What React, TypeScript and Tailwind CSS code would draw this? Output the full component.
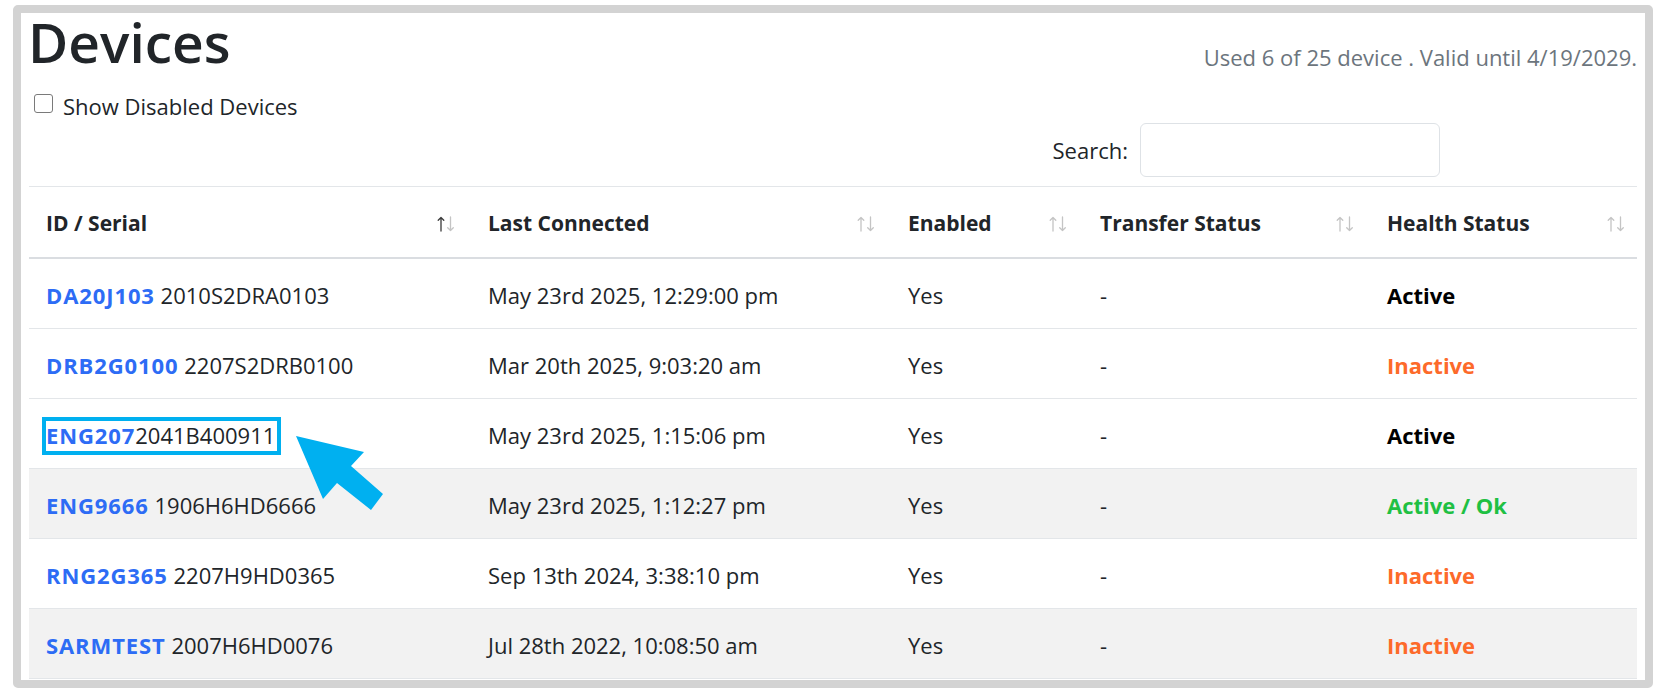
import React from "react";

type Row = {
  id: string;
  serial: string;
  sep: boolean;
  last: string;
  status: string;
  statusColor: string;
  striped: boolean;
  highlight?: boolean;
};

const rows: Row[] = [
  { id: "DA20J103", serial: "2010S2DRA0103", sep: true, last: "May 23rd 2025, 12:29:00 pm", status: "Active", statusColor: "text-black", striped: false },
  { id: "DRB2G0100", serial: "2207S2DRB0100", sep: true, last: "Mar 20th 2025, 9:03:20 am", status: "Inactive", statusColor: "text-[#fd6a2a]", striped: false },
  { id: "ENG207", serial: "2041B400911", sep: false, last: "May 23rd 2025, 1:15:06 pm", status: "Active", statusColor: "text-black", striped: false, highlight: true },
  { id: "ENG9666", serial: "1906H6HD6666", sep: true, last: "May 23rd 2025, 1:12:27 pm", status: "Active / Ok", statusColor: "text-[#1fc043]", striped: true },
  { id: "RNG2G365", serial: "2207H9HD0365", sep: true, last: "Sep 13th 2024, 3:38:10 pm", status: "Inactive", statusColor: "text-[#fd6a2a]", striped: false },
  { id: "SARMTEST", serial: "2007H6HD0076", sep: true, last: "Jul 28th 2022, 10:08:50 am", status: "Inactive", statusColor: "text-[#fd6a2a]", striped: true },
];

function SortIcon({ active }: { active?: boolean }) {
  const up = active ? "#3a3a3a" : "#c4c4c4";
  const down = "#c4c4c4";
  return (
    <svg width="18" height="16" viewBox="0 0 18 16" fill="none" strokeWidth="1.3" strokeLinecap="round" strokeLinejoin="round">
      <path d="M4 15V1.5M1.2 4.3L4 1.5L6.8 4.3" stroke={up} />
      <path d="M13.5 1V14.5M10.7 11.7L13.5 14.5L16.3 11.7" stroke={down} />
    </svg>
  );
}

const cols = "grid grid-cols-[440px_420px_192px_287px_271px]";

export default function App() {
  const headers = ["ID / Serial", "Last Connected", "Enabled", "Transfer Status", "Health Status"];
  return (
    <div className="relative w-[1660px] h-[696px] bg-white font-['Open_Sans','Noto_Sans',sans-serif] text-[#212529]">
      <div className="ml-[13px] mt-[5px] w-[1640px] h-[683px] border-[8px] border-[#d3d3d3] rounded-[5px] overflow-hidden bg-white">
        <div className="px-[8px]">
          <div className="flex justify-between items-start">
            <h1 className="text-[55px] leading-[56px] font-semibold -ml-[1px] pt-[1px]">Devices</h1>
            <p className="pt-[28px] text-[22px] leading-[33px] text-[#6c757d]">Used 6 of 25 device . Valid until 4/19/2029.</p>
          </div>
          <label className="mt-[16px] flex items-start text-[22px] leading-[33px]">
            <span className="mt-[4px] ml-[5px] w-[19px] h-[19px] rounded-[3px] border-[1.5px] border-[#7a7a7a] bg-white shrink-0" />
            <span className="ml-[10px]">Show Disabled Devices</span>
          </label>
          <div className="flex items-center justify-end pr-[197px] h-[54px]">
            <span className="text-[22px] leading-[33px]">Search:</span>
            <div className="ml-[12px] w-[300px] h-[54px] rounded-[6px] border border-[#dee2e6] bg-white" />
          </div>
          <div className="mt-[9px]">
            <div className={`${cols} h-[73px] border-t border-b-2 border-t-[#e3e6e9] border-b-[#dadde1]`}>
              {headers.map((h, i) => (
                <div
                  key={h}
                  className={`flex items-center justify-between pt-[3px] pr-[14px] ${i === 0 ? "pl-[17px]" : "pl-[19px]"}`}
                >
                  <span className="text-[21px] font-bold">{h}</span>
                  <SortIcon active={i === 0} />
                </div>
              ))}
            </div>
            {rows.map((r) => (
              <div
                key={r.id}
                className={`${cols} h-[70px] border-b border-[#e3e6e9] text-[22px] ${r.striped ? "bg-[#f2f2f2]" : "bg-white"}`}
              >
                <div className="flex items-center pl-[17px] pt-[3px]">
                  <span className="relative inline-block leading-[33px] whitespace-nowrap">
                    <span className="font-bold text-[#2d6cf5] tracking-[0.9px]">{r.id}</span>
                    {r.sep ? " " : ""}
                    {r.serial}
                    {r.highlight && (
                      <span className="absolute -left-[4px] -right-[6px] -top-[2px] -bottom-[3px] border-[4px] border-[#00b0f0]" />
                    )}
                  </span>
                </div>
                <div className="flex items-center pl-[19px] pt-[3px] whitespace-nowrap">{r.last}</div>
                <div className="flex items-center pl-[19px] pt-[3px]">Yes</div>
                <div className="flex items-center pl-[19px] pt-[3px]">-</div>
                <div className={`flex items-center pl-[19px] pt-[3px] font-bold ${r.statusColor}`}>{r.status}</div>
              </div>
            ))}
          </div>
        </div>
      </div>
      <svg className="absolute left-0 top-0 pointer-events-none" width="1660" height="696" viewBox="0 0 1660 696">
        <polygon
          points="296,431 364,447 351,461 383,489 371,505 337,478 323,494"
          fill="#00b0f0"
        />
      </svg>
    </div>
  );
}
